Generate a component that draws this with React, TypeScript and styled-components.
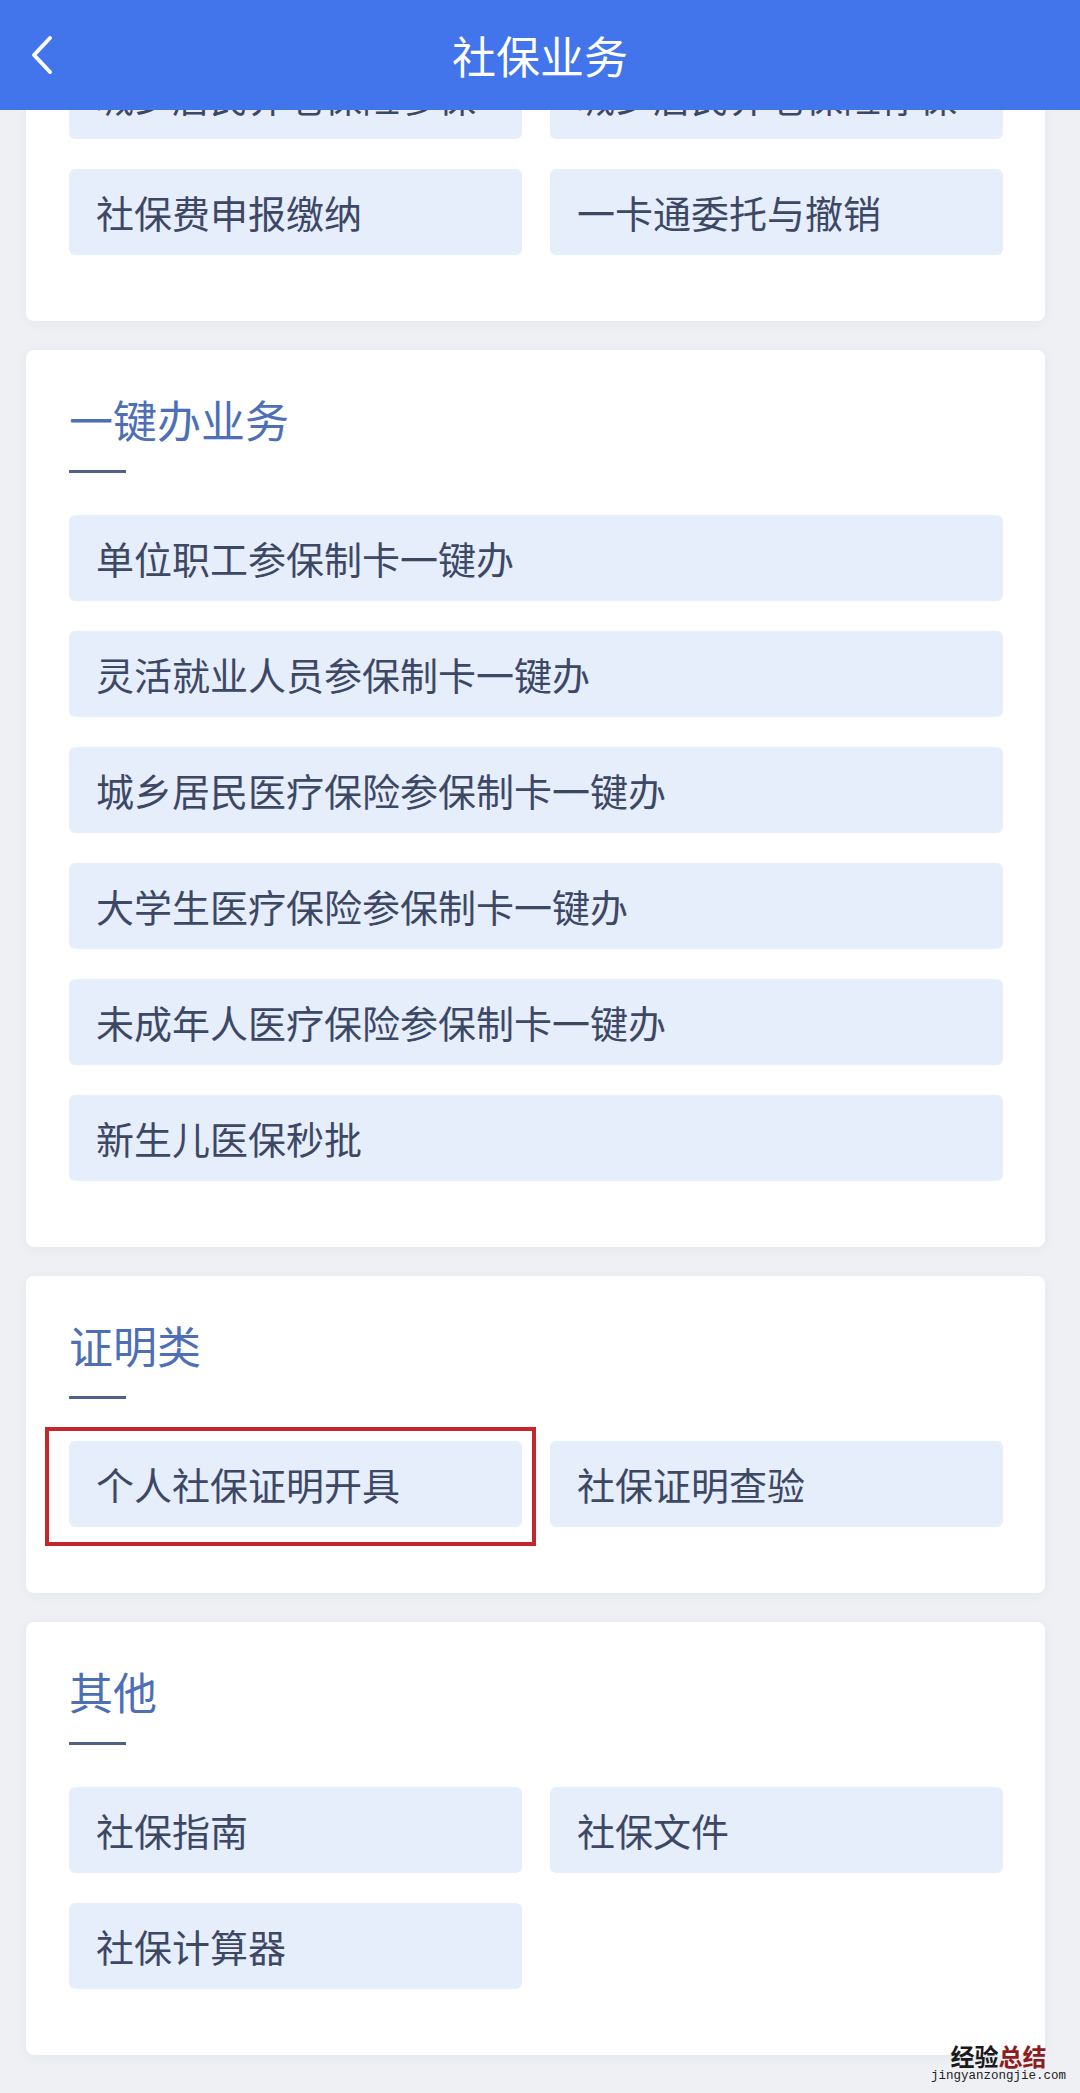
import styled, { createGlobalStyle } from "styled-components";

const GlobalStyle = createGlobalStyle`
    * {
        box-sizing: border-box;
    }

    body {
        margin: 0;
        background-color: #eef0f4;
        font-family: "Noto Sans CJK SC", "Noto Sans", sans-serif;
    }
`

const Header = styled.header`
    position: fixed;
    top: 0;
    left: 0;
    right: 0;
    height: 110px;
    z-index: 10;
    display: grid;
    grid-template-columns: 1fr auto 1fr;
    align-items: center;
    background-color: #4274eb;
    color: #ffffff;
`

const BackButton = styled.button`
    justify-self: start;
    display: flex;
    align-items: center;
    margin-left: 28px;
    padding: 0;
    border: none;
    background: transparent;
    color: inherit;
`

const HeaderTitle = styled.h1`
    margin: 0;
    font-size: 44px;
    font-weight: 400;
    line-height: 44px;
    letter-spacing: 0;
`

const Content = styled.main`
    display: flex;
    flex-direction: column;
    gap: 29px;
    margin-top: -112px;
    padding: 0 35px 38px 26px;
`

const Card = styled.section`
    padding: 47px 42px 66px 43px;
    background-color: #ffffff;
    border-radius: 8px;
    box-shadow: 0 2px 12px rgba(40, 50, 80, 0.05);
`

const SectionTitle = styled.h2`
    margin: 0;
    font-size: 44px;
    font-weight: 400;
    line-height: 44px;
    color: #4c6fb6;
`

const TitleBar = styled.div`
    width: 57px;
    height: 3px;
    margin: 29px 0 42px;
    background-color: #51628a;
`

const Grid = styled.div<{ $columns: number }>`
    display: grid;
    grid-template-columns: repeat(${p => p.$columns}, 1fr);
    column-gap: 28px;
    row-gap: 30px;
`

const ItemWrap = styled.div`
    position: relative;
`

const Item = styled.button`
    display: flex;
    align-items: center;
    width: 100%;
    height: 86px;
    padding: 0 0 2px 27px;
    border: none;
    border-radius: 6px;
    background-color: #e6edfb;
    color: #3d4865;
    font-family: inherit;
    font-size: 38px;
    font-weight: 400;
    text-align: left;
    white-space: nowrap;
`

const Highlight = styled.span`
    position: absolute;
    top: -14px;
    left: -24px;
    right: -14px;
    bottom: -19px;
    border: 4px solid #c4262e;
    pointer-events: none;
`

const Watermark = styled.div`
    position: absolute;
    right: 14px;
    top: 2044px;
    display: flex;
    flex-direction: column;
    align-items: center;
    line-height: 1;
`

const MarkTitle = styled.div`
    font-size: 24px;
    font-weight: 700;
    color: #1a1a1a;
    letter-spacing: 0;
`

const MarkRed = styled.span`
    color: #8e1c1c;
`

const MarkUrl = styled.div`
    margin-top: 2px;
    font-family: "Liberation Mono", monospace;
    font-size: 12.5px;
    color: #222;
`

type Section = {
    title: string;
    columns: number;
    items: string[];
    highlight?: string;
}

const sections: Section[] = [
    {
        title: "参保登记",
        columns: 2,
        items: ["城乡居民养老保险参保", "城乡居民养老保险停保", "社保费申报缴纳", "一卡通委托与撤销"],
    },
    {
        title: "一键办业务",
        columns: 1,
        items: [
            "单位职工参保制卡一键办",
            "灵活就业人员参保制卡一键办",
            "城乡居民医疗保险参保制卡一键办",
            "大学生医疗保险参保制卡一键办",
            "未成年人医疗保险参保制卡一键办",
            "新生儿医保秒批",
        ],
    },
    {
        title: "证明类",
        columns: 2,
        items: ["个人社保证明开具", "社保证明查验"],
        highlight: "个人社保证明开具",
    },
    {
        title: "其他",
        columns: 2,
        items: ["社保指南", "社保文件", "社保计算器"],
    },
]

const ChevronLeft = () => (
    <svg width="28" height="42" viewBox="0 0 28 42" fill="none">
        <path d="M22 4 L6 21 L22 38" stroke="#ffffff" strokeWidth="4" strokeLinecap="round" strokeLinejoin="round" />
    </svg>
)

const App = () => {
    return (
        <>
            <GlobalStyle />
            <Header>
                <BackButton aria-label="返回">
                    <ChevronLeft />
                </BackButton>
                <HeaderTitle>社保业务</HeaderTitle>
                <div />
            </Header>
            <Content>
                {sections.map(section => (
                    <Card key={section.title}>
                        <SectionTitle>{section.title}</SectionTitle>
                        <TitleBar />
                        <Grid $columns={section.columns}>
                            {section.items.map(item => (
                                <ItemWrap key={item}>
                                    <Item>{item}</Item>
                                    {section.highlight === item && <Highlight />}
                                </ItemWrap>
                            ))}
                        </Grid>
                    </Card>
                ))}
            </Content>
            <Watermark>
                <MarkTitle>经验<MarkRed>总结</MarkRed></MarkTitle>
                <MarkUrl>jingyanzongjie.com</MarkUrl>
            </Watermark>
        </>
    )
}

export default App
